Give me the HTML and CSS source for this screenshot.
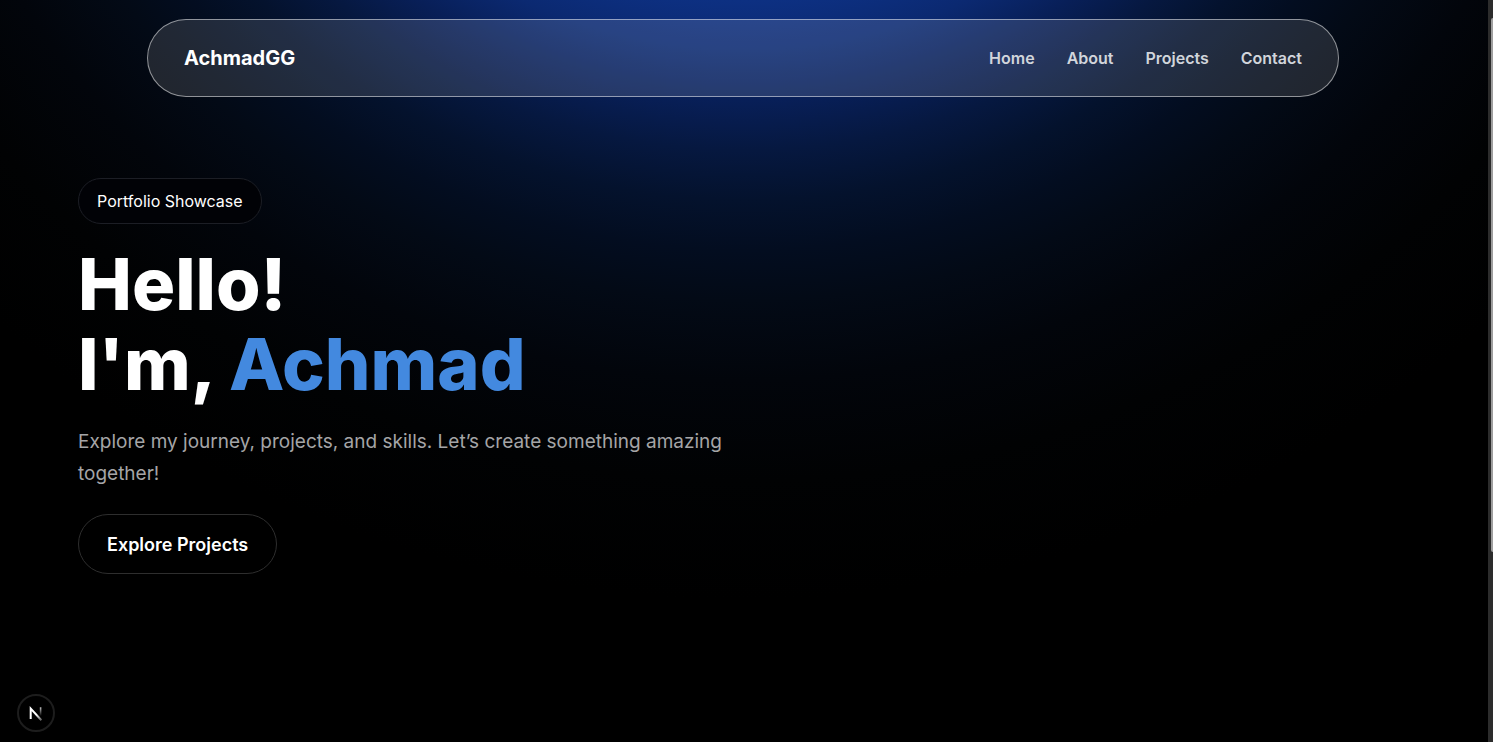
FILE: index.html
```html
<!DOCTYPE html>
<html lang="en">
<head>
  <meta charset="utf-8">
  <meta name="viewport" content="width=device-width, initial-scale=1">
  <title>AchmadGG</title>
  <link rel="stylesheet" href="styles.css">
</head>
<body>
  <div class="page">
    <header class="navbar">
      <a class="brand" href="#home">AchmadGG</a>
      <nav class="links" aria-label="Main">
        <a href="#home">Home</a>
        <a href="#about">About</a>
        <a href="#projects">Projects</a>
        <a href="#contact">Contact</a>
      </nav>
    </header>
    <main class="hero" id="home">
      <p class="badge">Portfolio Showcase</p>
      <h1 class="title">Hello!<br>I'm, <span class="name">Achmad</span></h1>
      <p class="intro">Explore my journey, projects, and skills. Let’s create something amazing together!</p>
      <button class="cta" type="button">Explore Projects</button>
    </main>
    <button class="devtools" type="button" aria-label="Open developer tools">
      <svg viewBox="0 0 38 38" fill="none" aria-hidden="true">
        <defs>
          <linearGradient id="diagonal" x1="20" y1="20" x2="26" y2="27" gradientUnits="userSpaceOnUse">
            <stop stop-color="#fff"/><stop offset="1" stop-color="#fff" stop-opacity="0.2"/>
          </linearGradient>
          <linearGradient id="stem" x1="24" y1="13" x2="24" y2="22" gradientUnits="userSpaceOnUse">
            <stop stop-color="#fff" stop-opacity="0.8"/><stop offset="1" stop-color="#fff" stop-opacity="0"/>
          </linearGradient>
        </defs>
        <path d="M13.7 25V14.6L24.4 26.2" stroke="url(#diagonal)" stroke-width="2"/>
        <path d="M23.6 13.3V22" stroke="url(#stem)" stroke-width="1.6"/>
      </svg>
    </button>
  </div>
  <div class="scrollbar" aria-hidden="true"><div class="thumb"></div></div>
</body>
</html>
```
FILE: styles.css
```css
* {
  box-sizing: border-box;
}

body {
  display: grid;
  grid-template-columns: minmax(0, 1fr) 5px;
  min-height: 100vh;
  margin: 0;
  background: #000;
  color: #fff;
  font-family: Inter, "Liberation Sans", sans-serif;
}

.page {
  padding-top: 19px;
  background: radial-gradient(ellipse 1080px 1000px at 50% -400px,
    #0d3082 40%, #0b2971 45%, #081f58 50%, #061840 55%, #04122d 60%,
    #030d20 65%, #030a16 70%, #02050b 78%, #010203 88%, #000 100%);
}

.navbar {
  display: flex;
  align-items: center;
  justify-content: space-between;
  height: 78px;
  margin: 0 149px 0 147px;
  padding: 0 36px;
  border: 1px solid rgba(255, 255, 255, 0.5);
  border-radius: 40px;
  background: rgba(255, 255, 255, 0.12);
}

.navbar a {
  color: #d1d5db;
  text-decoration: none;
}

.navbar .brand {
  color: #fff;
  font-size: 20px;
  font-weight: 700;
}

.links {
  display: flex;
  gap: 32px;
  font-size: 16px;
  font-weight: 600;
}

.hero {
  display: flex;
  flex-direction: column;
  align-items: flex-start;
  padding: 81px 78px 0;
}

.badge {
  margin: 0 0 20px;
  padding: 10px 18px;
  border: 1px solid #1c1e25;
  border-radius: 24px;
  background: #010206;
  font-size: 16px;
  line-height: 24px;
}

.title {
  margin: 0;
  font-size: 72px;
  font-weight: 800;
  line-height: 80px;
}

.name {
  color: #4389df;
}

.intro {
  max-width: 672px;
  margin: 22px 0 24px;
  color: #a5a5a7;
  font-size: 19px;
  line-height: 32px;
}

.cta {
  height: 60px;
  padding: 0 28px;
  border: 1px solid #2e2e2e;
  border-radius: 30px;
  background: #000;
  color: #fff;
  font-family: inherit;
  font-size: 18px;
  font-weight: 600;
}

.devtools {
  position: fixed;
  bottom: 10px;
  left: 17px;
  width: 38px;
  height: 38px;
  padding: 0;
  border: 2px solid #1d1d1d;
  border-radius: 50%;
  background: #000;
}

.devtools svg {
  display: block;
  width: 38px;
  height: 38px;
  margin: -2px;
}

.scrollbar {
  padding: 18px 0 0 3px;
  background: #2c2c2c;
}

.thumb {
  height: 72vh;
  border-radius: 2px 0 0 2px;
  background: #9f9f9f;
}
```
